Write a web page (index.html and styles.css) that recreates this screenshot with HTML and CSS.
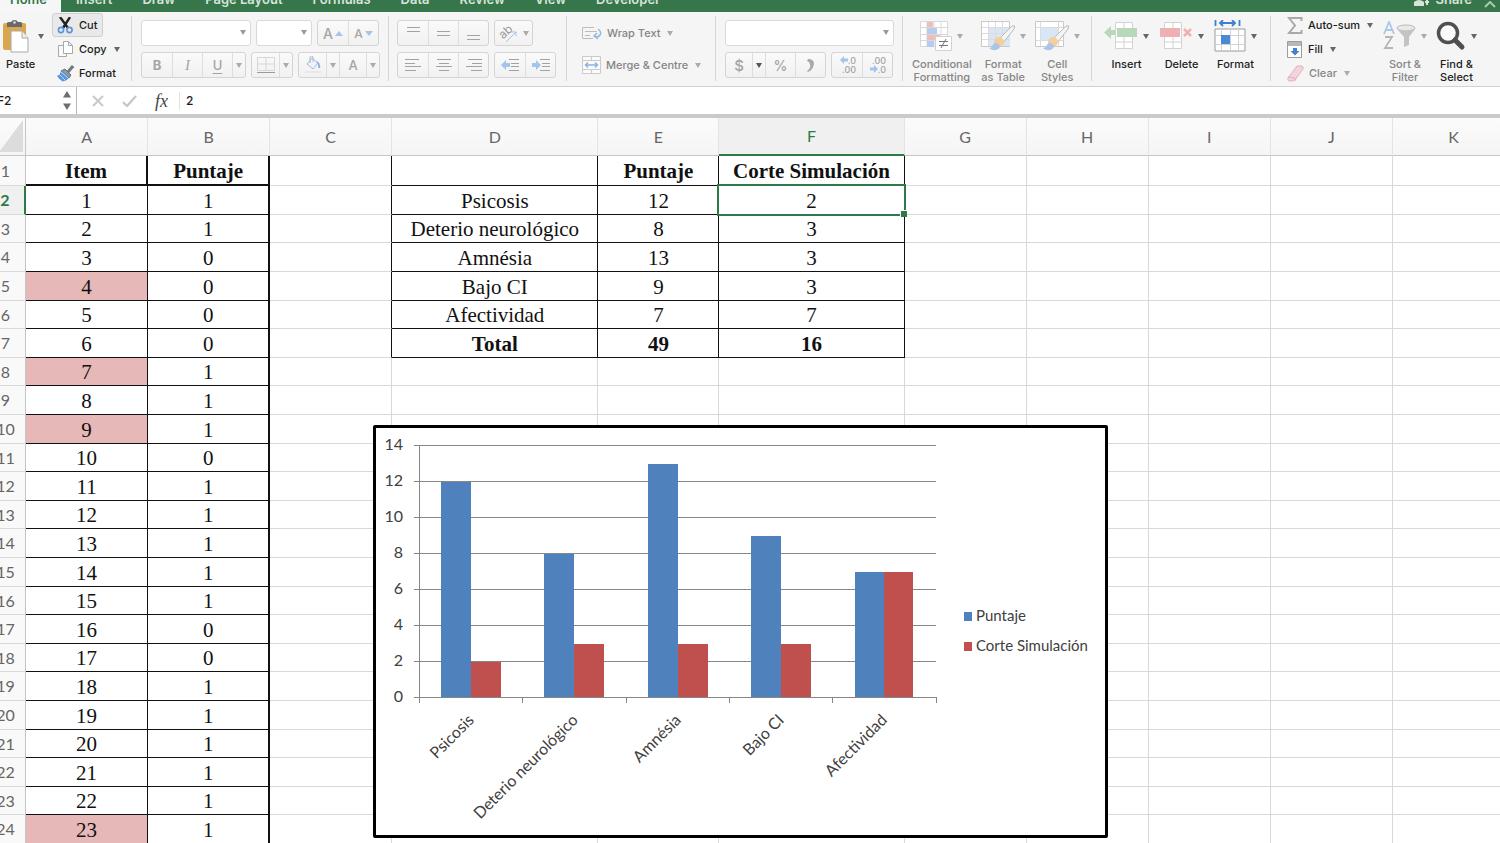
FILE: index.html
```html
<!DOCTYPE html>
<html lang="en">
<head>
<meta charset="utf-8">
<title>Spreadsheet</title>
<link rel="stylesheet" href="styles.css">
</head>
<body>
<svg class="defs" aria-hidden="true">
  <symbol id="caret" viewBox="0 0 6 5"><path d="M0 0h6L3 5z" fill="currentColor"/></symbol>
  <symbol id="brush" viewBox="0 0 28 26"><path d="M27 1 24 1 11 14l4 4L26 4z" fill="#f4f4f2" stroke="#b9b9b5"/><circle cx="11" cy="17" r="5" fill="#f3cf9f"/><path d="M1 23c4 0 3-4 6-5 3 0 5 2 5 4-2 4-8 4-11 1z" fill="#a9c6ea"/></symbol>
</svg>

<nav class="tabs" aria-label="Ribbon tabs">
  <a class="tab tab-active" href="#home">Home</a>
  <a class="tab" href="#insert">Insert</a>
  <a class="tab" href="#draw">Draw</a>
  <a class="tab" href="#layout">Page Layout</a>
  <a class="tab" href="#formulas">Formulas</a>
  <a class="tab" href="#data">Data</a>
  <a class="tab" href="#review">Review</a>
  <a class="tab" href="#view">View</a>
  <a class="tab" href="#developer">Developer</a>
  <a class="tab share" href="#share"><svg width="16" height="14" viewBox="0 0 16 14"><circle cx="5" cy="4" r="4" fill="#d5e5da"/><path d="M0 14V10q5-4 10 0v4z" fill="#d5e5da"/><path d="M13 7v6M11 10h4" stroke="#d5e5da" stroke-width="2"/></svg>Share</a>
  <a class="tab collapse" href="#collapse" aria-label="Collapse ribbon"><svg width="12" height="7" viewBox="0 0 12 7"><path d="m1 6 5-5 5 5" fill="none" stroke="#a9c9b3" stroke-width="2"/></svg></a>
</nav>

<div class="ribbon">
  <section class="group clipboard">
    <button class="big"><span class="pic"><svg width="26" height="34" viewBox="0 0 26 34"><rect x="0" y="4" width="23" height="27" rx="2" fill="#dba650"/><path d="M4 8V4q0-1 2-1h2a4 4 0 0 1 7 0h2q2 0 2 1v4z" fill="#6a6a6a"/><circle cx="11.500" cy="3.500" r="1.300" fill="#ddd"/><path d="M8 12h11l6 7v14H8z" fill="#fff" stroke="#aaa"/><path d="M19 12v7h6" fill="#eee" stroke="#aaa"/></svg><svg class="caret"><use href="#caret"/></svg></span><span>Paste</span></button>
    <div class="stack">
      <button class="small pressed"><svg width="17" height="17" viewBox="0 0 17 17"><path d="M3 0 11 11M13 0 6 11" stroke="#222" stroke-width="2.400"/><circle cx="4" cy="13" r="2.600" fill="none" stroke="#5b93dc" stroke-width="1.600"/><circle cx="12.500" cy="13" r="2.600" fill="none" stroke="#5b93dc" stroke-width="1.600"/></svg>Cut</button>
      <button class="small"><svg width="17" height="17" viewBox="0 0 17 17"><path d="M5.500.500h5l3 3v8h-8zM10.500.500v3h3" transform="translate(-4 4)" fill="#fafafa" stroke="#a9a9a9"/><path d="M6.500.500h5l4 4v8h-9zM11.500.500v4h4" fill="#fff" stroke="#a9a9a9"/></svg>Copy<svg class="caret"><use href="#caret"/></svg></button>
      <button class="small"><svg width="17" height="17" viewBox="0 0 17 17"><path d="m16 1-5 6" stroke="#6d7986" stroke-width="3"/><path d="m8 4 6 6-2 3-8-7z" fill="#8a98a5" stroke="#66727e"/><path d="M4 6 12 13q-3 4-7 3Q2 14 0 11q3-1 4-5z" fill="#5596de"/><path d="M2 9l6 6M4 7l7 6" stroke="#c3d9ef"/></svg>Format</button>
    </div>
  </section>

  <section class="group dim font">
    <div class="row">
      <span class="combo combo-font"><select aria-label="Font"><option></option></select><svg class="caret"><use href="#caret"/></svg></span>
      <span class="combo combo-size"><select aria-label="Font size"><option></option></select><svg class="caret"><use href="#caret"/></svg></span>
      <div class="seg"><button class="grow">A<svg width="8" height="5" viewBox="0 0 8 5"><path d="M0 5h8L4 0z" fill="#a8c3e4"/></svg></button><button class="shrink">A<svg width="8" height="5" viewBox="0 0 8 5"><path d="M0 0h8L4 5z" fill="#a8c3e4"/></svg></button></div>
    </div>
    <div class="row">
      <div class="seg"><button class="b">B</button><button class="i">I</button><button class="u">U</button><button class="drop" aria-label="Underline styles"><svg class="caret"><use href="#caret"/></svg></button></div>
      <div class="seg"><button class="mid" aria-label="Borders"><svg width="18" height="17" viewBox="0 0 18 17"><path d="M.500.500h17v13H.500zM9 0v14M0 7h18" fill="none" stroke="#d6d6d6"/><path d="M0 15.500h18" stroke="#9a9a9a"/></svg></button><button class="drop" aria-label="Border styles"><svg class="caret"><use href="#caret"/></svg></button></div>
      <div class="seg"><button class="mid" aria-label="Fill colour"><svg width="16" height="18" viewBox="0 0 16 18"><path d="m7 2 6 5-5 6-6-5z" fill="#eef3f9" stroke="#a9b9cf"/><path d="M5 7V1q2-2 3 0v5" fill="none" stroke="#a9b9cf"/><path d="M12 6q3 2 2 6" stroke="#8fb3e2" stroke-width="2" fill="none"/><path d="M0 16h16" stroke="#e8e8e8" stroke-width="2"/></svg></button><button class="drop" aria-label="Fill colours"><svg class="caret"><use href="#caret"/></svg></button><button class="mid">A</button><button class="drop" aria-label="Font colours"><svg class="caret"><use href="#caret"/></svg></button></div>
    </div>
  </section>

  <section class="group dim align">
    <div class="row">
      <div class="seg">
        <button aria-label="Top align"><svg width="15" height="14" viewBox="0 0 15 14"><path d="M1 1.500h13M1 5.500h13" stroke="#a2a2a2"/></svg></button>
        <button aria-label="Middle align"><svg width="15" height="14" viewBox="0 0 15 14"><path d="M1 5.500h13M1 9.500h13" stroke="#a2a2a2"/></svg></button>
        <button aria-label="Bottom align"><svg width="15" height="14" viewBox="0 0 15 14"><path d="M1 9.500h13M1 13.500h13" stroke="#a2a2a2"/></svg></button>
      </div>
      <div class="seg"><button class="orient" aria-label="Orientation"><svg width="20" height="20" viewBox="0 0 20 20"><text class="ab" x="2" y="15" transform="rotate(-42 5 13)">ab</text><path d="M7 19 17 9M13 9h4v4" fill="none" stroke="#a9c1e4"/></svg><svg class="caret"><use href="#caret"/></svg></button></div>
    </div>
    <div class="row">
      <div class="seg">
        <button aria-label="Align left"><svg width="16" height="12" viewBox="0 0 16 12"><path d="M0 .500h14M0 4.500h10M0 7.500h16M0 11.500h11" stroke="#a2a2a2"/></svg></button>
        <button aria-label="Centre"><svg width="16" height="12" viewBox="0 0 16 12"><path d="M1 .500h14M3 4.500h10M0 7.500h16M3 11.500h10" stroke="#a2a2a2"/></svg></button>
        <button aria-label="Align right"><svg width="16" height="12" viewBox="0 0 16 12"><path d="M2 .500h14M6 4.500h10M0 7.500h16M5 11.500h11" stroke="#a2a2a2"/></svg></button>
      </div>
      <div class="seg">
        <button aria-label="Decrease indent"><svg width="18" height="12" viewBox="0 0 18 12"><path d="M8 .500h10M10 4.500h8M10 7.500h8M8 11.500h10" stroke="#a2a2a2"/><path d="M0 6l5-5v3h4v4H5v3z" fill="#a3c4ec"/></svg></button>
        <button aria-label="Increase indent"><svg width="18" height="12" viewBox="0 0 18 12"><path d="M8 .500h10M10 4.500h8M10 7.500h8M8 11.500h10" stroke="#a2a2a2"/><path d="M9 6 4 1v3H0v4h4v3z" fill="#a3c4ec"/></svg></button>
      </div>
    </div>
  </section>

  <section class="group dim wrap">
    <button class="small"><svg width="20" height="15" viewBox="0 0 20 15"><path d="M12 1.500H.500v11H11M3 5.500h12M3 9.500h5" fill="none" stroke="#bcbcbc"/><path d="M16 3q4 3 2 6-2 3-5 1M15 7l-3 3 4 3" fill="none" stroke="#94b7e4" stroke-width="1.500"/></svg>Wrap Text<svg class="caret"><use href="#caret"/></svg></button>
    <button class="small"><svg width="19" height="18" viewBox="0 0 19 18"><path d="M.500.500h18v17H.500zM9.500 0v5M9.500 13v5M0 4.500h19M0 13.500h19" fill="#fafafa" stroke="#cbcbcb"/><path d="M3 9h13M6 6.500 3.500 9 6 11.500M13 6.500 15.500 9 13 11.500" fill="none" stroke="#8db2e4" stroke-width="1.500"/></svg>Merge &amp; Centre<svg class="caret"><use href="#caret"/></svg></button>
  </section>

  <section class="group dim number">
    <span class="combo combo-number"><select aria-label="Number format"><option></option></select><svg class="caret"><use href="#caret"/></svg></span>
    <div class="row">
      <div class="seg"><button class="money">$</button><button class="drop dark" aria-label="Currency"><svg class="caret"><use href="#caret"/></svg></button><button class="pct">%</button><button class="comma" aria-label="Comma style"><svg width="8" height="13" viewBox="0 0 8 13"><path d="M1 0q6 0 6 5-1 6-6 8l-1-1q4-3 3-6 0-3-3-4z" fill="#a9a9a9"/></svg></button></div>
      <div class="seg"><button class="dec"><span><svg width="8" height="8" viewBox="0 0 8 8"><path d="M0 4l4-4v2.500h4v3H4V8z" fill="#a3c4ec"/></svg>.0</span><span>.00</span></button><button class="dec"><span>.00</span><span><svg width="8" height="8" viewBox="0 0 8 8"><path d="M8 4 4 0v2.500H0v3h4V8z" fill="#a3c4ec"/></svg>.0</span></button></div>
    </div>
  </section>

  <section class="group dim styles">
    <button class="big"><span class="pic"><svg width="32" height="30" viewBox="0 0 32 30"><path d="M.500.500h27v25H.500zM7 0v26M14 0v26M21 0v26M0 6.500h28M0 13.500h28M0 19.500h28" fill="#fff" stroke="#d9d9d9"/><path d="M7 1h6v5H7zM7 14h13v5H7z" fill="#f3bcbc"/><path d="M7 7h10v6H7zM7 20h7v6H7z" fill="#b2cdf0"/><path d="M15.500 15.500h16v14h-16z" fill="#fff" stroke="#d2d2d2"/><path d="M19 20.500h9M19 24.500h9M26 18l-5 9" stroke="#777"/></svg><svg class="caret"><use href="#caret"/></svg></span><span>Conditional<br>Formatting</span></button>
    <button class="big"><span class="pic"><svg width="34" height="30" viewBox="0 0 34 30"><path d="M.500.500h28v25H.500z" fill="#fff" stroke="#c9c9c9"/><path d="M7 7h22v18H7z" fill="#d8e6f6"/><path d="M7.500 1v24M14.500 1v24M21.500 1v24M1 6.500h27M1 12.500h27M1 18.500h27" stroke="#dcdcdc"/><use href="#brush" x="7" y="4" width="28" height="26"/></svg><svg class="caret"><use href="#caret"/></svg></span><span>Format<br>as Table</span></button>
    <button class="big"><span class="pic"><svg width="34" height="30" viewBox="0 0 34 30"><path d="M.500.500h28v25H.500z" fill="#fff" stroke="#c9c9c9"/><path d="M5.500 1v24M23.500 1v24M1 6.500h27M1 19.500h27" stroke="#dcdcdc"/><path d="M6 7h17v12H6z" fill="#d8e6f6"/><use href="#brush" x="7" y="4" width="28" height="26"/></svg><svg class="caret"><use href="#caret"/></svg></span><span>Cell<br>Styles</span></button>
  </section>

  <section class="group cells">
    <button class="big"><span class="pic"><svg width="34" height="30" viewBox="0 0 34 30"><path d="M11.500 1.500h17v26h-17zM20 1v26M11 8h18M11 21h18" fill="#fff" stroke="#d2d2d2"/><path d="M13 7h20v9H13z" fill="#b7d9ba"/><path d="M0 11.500 7 5v4h4v5H7v4z" fill="#b7d9ba"/></svg><svg class="caret"><use href="#caret"/></svg></span><span>Insert</span></button>
    <button class="big"><span class="pic"><svg width="34" height="30" viewBox="0 0 34 30"><path d="M5.500 1.500h17v26h-17zM14 1v26M5 8h18M5 21h18" fill="#fff" stroke="#d2d2d2"/><path d="M1 7h20v9H1z" fill="#eeb0b3"/><path d="m25 8 7 7M32 8l-7 7" stroke="#eeb0b3" stroke-width="2.500"/></svg><svg class="caret"><use href="#caret"/></svg></span><span>Delete</span></button>
    <button class="big"><span class="pic"><svg width="32" height="32" viewBox="0 0 32 32"><path d="M1.500 0v6M25.500 0v6M6 3h15M9 0 6 3l3 3M18 0l3 3-3 3" fill="none" stroke="#3c80cf" stroke-width="1.800"/><path d="M1 9h30v22H1z" fill="#fff" stroke="#9b9b9b"/><path d="M7.500 9v21M16.500 9v21M24.500 9v21M1 15.500h30M1 24.500h30" stroke="#d2d2d2"/><path d="M7 15h9v9H7z" fill="#4a8ad4"/></svg><svg class="caret"><use href="#caret"/></svg></span><span>Format</span></button>
  </section>

  <section class="group editing">
    <div class="stack">
      <button class="small"><svg width="16" height="17" viewBox="0 0 16 17"><path d="M14.500 4V1H2l6 7.500L2 16h12.500v-3" fill="none" stroke="#a9a9a9" stroke-width="2"/></svg>Auto-sum<svg class="caret"><use href="#caret"/></svg></button>
      <button class="small"><svg width="16" height="17" viewBox="0 0 16 17"><path d="M.500.500h14v16H.500z" fill="#fff" stroke="#9d9d9d"/><path d="M1 1h13v4H1z" fill="#b8b8b8"/><path d="M6 7h4v3h2.500L8 14.500 3.500 10H6z" fill="#3f82d2"/></svg>Fill<svg class="caret"><use href="#caret"/></svg></button>
      <button class="small dim"><svg width="17" height="17" viewBox="0 0 17 17"><path d="M10 1h5q2 1 1 3l-8 11q-1 1-3 1H2q-2-1-1-3z" fill="#f4d3da" stroke="#dfb5bf"/><path d="m1 12 7 1v3" fill="none" stroke="#dfb5bf"/></svg>Clear<svg class="caret"><use href="#caret"/></svg></button>
    </div>
    <button class="big dim"><span class="pic"><svg width="33" height="30" viewBox="0 0 33 30"><path d="M1 13 6 1l5 12M3 9h6" fill="none" stroke="#a9c7ea" stroke-width="1.800"/><path d="M2 16h7L2 27h8" fill="none" stroke="#b5b5b5" stroke-width="1.800"/><ellipse cx="23" cy="7" rx="9" ry="3" fill="#e9e9e9" stroke="#b9b9b9"/><path d="M14 8q4 3 18 0l-6 8v8l-5 2V16z" fill="#c3c3c3"/></svg><svg class="caret"><use href="#caret"/></svg></span><span>Sort &amp;<br>Filter</span></button>
    <button class="big"><span class="pic"><svg width="30" height="30" viewBox="0 0 30 30"><circle cx="12" cy="12" r="9.500" fill="#fafafa" stroke="#505050" stroke-width="3.500"/><path d="m19 19 7 7" stroke="#505050" stroke-width="5" stroke-linecap="round"/></svg><svg class="caret"><use href="#caret"/></svg></span><span>Find &amp;<br>Select</span></button>
  </section>
</div>

<div class="formula-bar">
  <div class="name-box"><input aria-label="Name box" value="F2"><svg width="8" height="20" viewBox="0 0 8 20"><path d="M0 6.500 4 0l4 6.500zM0 12.500h8L4 19z" fill="#6e6e6e"/></svg></div>
  <button class="fb-btn" aria-label="Cancel"><svg width="12" height="12" viewBox="0 0 12 12"><path d="m1 1 10 10M11 1 1 11" stroke="#c9c9c9" stroke-width="2"/></svg></button>
  <button class="fb-btn" aria-label="Enter"><svg width="15" height="12" viewBox="0 0 15 12"><path d="m1 7 4 4 9-10" fill="none" stroke="#c9c9c9" stroke-width="2.400"/></svg></button>
  <button class="fx">fx</button>
  <input class="formula" aria-label="Formula" value="2">
</div>

<main class="sheet">
  <table>
    <colgroup><col class="c-head"><col><col><col><col class="c-d"><col class="c-e"><col class="c-f"><col><col><col><col><col></colgroup>
    <thead><tr><th class="corner"><svg width="24" height="33" viewBox="0 0 24 33"><path d="M24 0v32H0z" fill="#dcdcdc"/></svg></th><th>A</th><th>B</th><th>C</th><th>D</th><th>E</th><th class="sel">F</th><th>G</th><th>H</th><th>I</th><th>J</th><th>K</th></tr></thead>
    <tbody>
      <tr><th>1</th><td>Item</td><td>Puntaje</td><td></td><td></td><td>Puntaje</td><td>Corte Simulación</td><td></td><td></td><td></td><td></td><td></td></tr>
      <tr><th class="sel">2</th><td>1</td><td>1</td><td></td><td>Psicosis</td><td>12</td><td class="active">2</td><td></td><td></td><td></td><td></td><td></td></tr>
      <tr><th>3</th><td>2</td><td>1</td><td></td><td>Deterio neurológico</td><td>8</td><td>3</td><td></td><td></td><td></td><td></td><td></td></tr>
      <tr><th>4</th><td>3</td><td>0</td><td></td><td>Amnésia</td><td>13</td><td>3</td><td></td><td></td><td></td><td></td><td></td></tr>
      <tr><th>5</th><td class="pink">4</td><td>0</td><td></td><td>Bajo CI</td><td>9</td><td>3</td><td></td><td></td><td></td><td></td><td></td></tr>
      <tr><th>6</th><td>5</td><td>0</td><td></td><td>Afectividad</td><td>7</td><td>7</td><td></td><td></td><td></td><td></td><td></td></tr>
      <tr class="total"><th>7</th><td>6</td><td>0</td><td></td><td>Total</td><td>49</td><td>16</td><td></td><td></td><td></td><td></td><td></td></tr>
      <tr><th>8</th><td class="pink">7</td><td>1</td><td></td><td></td><td></td><td></td><td></td><td></td><td></td><td></td><td></td></tr>
      <tr><th>9</th><td>8</td><td>1</td><td></td><td></td><td></td><td></td><td></td><td></td><td></td><td></td><td></td></tr>
      <tr><th>10</th><td class="pink">9</td><td>1</td><td></td><td></td><td></td><td></td><td></td><td></td><td></td><td></td><td></td></tr>
      <tr><th>11</th><td>10</td><td>0</td><td></td><td></td><td></td><td></td><td></td><td></td><td></td><td></td><td></td></tr>
      <tr><th>12</th><td>11</td><td>1</td><td></td><td></td><td></td><td></td><td></td><td></td><td></td><td></td><td></td></tr>
      <tr><th>13</th><td>12</td><td>1</td><td></td><td></td><td></td><td></td><td></td><td></td><td></td><td></td><td></td></tr>
      <tr><th>14</th><td>13</td><td>1</td><td></td><td></td><td></td><td></td><td></td><td></td><td></td><td></td><td></td></tr>
      <tr><th>15</th><td>14</td><td>1</td><td></td><td></td><td></td><td></td><td></td><td></td><td></td><td></td><td></td></tr>
      <tr><th>16</th><td>15</td><td>1</td><td></td><td></td><td></td><td></td><td></td><td></td><td></td><td></td><td></td></tr>
      <tr><th>17</th><td>16</td><td>0</td><td></td><td></td><td></td><td></td><td></td><td></td><td></td><td></td><td></td></tr>
      <tr><th>18</th><td>17</td><td>0</td><td></td><td></td><td></td><td></td><td></td><td></td><td></td><td></td><td></td></tr>
      <tr><th>19</th><td>18</td><td>1</td><td></td><td></td><td></td><td></td><td></td><td></td><td></td><td></td><td></td></tr>
      <tr><th>20</th><td>19</td><td>1</td><td></td><td></td><td></td><td></td><td></td><td></td><td></td><td></td><td></td></tr>
      <tr><th>21</th><td>20</td><td>1</td><td></td><td></td><td></td><td></td><td></td><td></td><td></td><td></td><td></td></tr>
      <tr><th>22</th><td>21</td><td>1</td><td></td><td></td><td></td><td></td><td></td><td></td><td></td><td></td><td></td></tr>
      <tr><th>23</th><td>22</td><td>1</td><td></td><td></td><td></td><td></td><td></td><td></td><td></td><td></td><td></td></tr>
      <tr><th>24</th><td class="pink">23</td><td>1</td><td></td><td></td><td></td><td></td><td></td><td></td><td></td><td></td><td></td></tr>
    </tbody>
  </table>

  <figure class="chart">
    <svg width="729" height="407" viewBox="0 0 729 407" role="img" aria-label="Puntaje and Corte Simulación by category">
      <path d="M38 17.500H560M38 53.500H560M38 89.500H560M38 125.500H560M38 161.500H560M38 197.500H560M38 233.500H560" class="line"/>
      <g class="blue">
        <rect x="65" y="54" width="30" height="215"/><rect x="168" y="126" width="30" height="143"/><rect x="272" y="36" width="30" height="233"/><rect x="375" y="108" width="30" height="161"/><rect x="479" y="144" width="29" height="125"/>
        <rect x="588" y="184" width="8" height="9"/>
      </g>
      <g class="red">
        <rect x="95" y="234" width="30" height="35"/><rect x="198" y="216" width="30" height="53"/><rect x="302" y="216" width="30" height="53"/><rect x="405" y="216" width="30" height="53"/><rect x="508" y="144" width="29" height="125"/>
        <rect x="588" y="214" width="8" height="9"/>
      </g>
      <path d="M38 269.500H560M43.500 17V275M146.500 269v6M250.500 269v6M353.500 269v6M456.500 269v6M560.500 269v6" class="line"/>
      <g class="values">
        <text x="27" y="22">14</text><text x="27" y="58">12</text><text x="27" y="94">10</text><text x="27" y="130">8</text><text x="27" y="166">6</text><text x="27" y="202">4</text><text x="27" y="238">2</text><text x="27" y="274">0</text>
      </g>
      <g class="cats">
        <text transform="translate(99 293) rotate(-45)">Psicosis</text>
        <text transform="translate(203 293) rotate(-45)">Deterio neurológico</text>
        <text transform="translate(306 293) rotate(-45)">Amnésia</text>
        <text transform="translate(409 293) rotate(-45)">Bajo CI</text>
        <text transform="translate(512 293) rotate(-45)">Afectividad</text>
      </g>
      <g class="legend"><text x="600" y="193">Puntaje</text><text x="600" y="223">Corte Simulación</text></g>
    </svg>
  </figure>
</main>
</body>
</html>
```
FILE: styles.css
```css
* { box-sizing: border-box; }

body {
  margin: 0;
  height: 100vh;
  display: flex;
  flex-direction: column;
  overflow: hidden;
  background: #fff;
  font-family: Inter, "Liberation Sans", sans-serif;
  font-size: 11px;
  font-weight: 500;
  color: #1c1c1c;
}

.defs { display: none; }

button, input, select {
  font: inherit;
  color: inherit;
  border: 0;
  padding: 0;
  margin: 0;
  background: none;
}

.caret { width: 6px; height: 5px; color: #666; flex: none; }
.dim { color: #858585; }
.dim .caret { color: #ababab; }

/* Tab strip */
.tabs {
  flex: none;
  display: flex;
  align-items: flex-end;
  height: 12px;
  overflow: hidden;
  background: #36764a;
}
.tab {
  padding: 0 15px 4px;
  line-height: 18px;
  font-size: 13px;
  font-weight: 600;
  color: #d5e5da;
  text-decoration: none;
  white-space: nowrap;
}
.tab-active {
  width: 61px;
  padding: 0 10px 4px;
  background: #f6f6f6;
  color: #36764a;
}
.share {
  display: flex;
  align-items: center;
  gap: 6px;
  margin-left: auto;
  padding: 0 6px 4px;
}
.collapse { padding: 0 4px 0 6px; }

/* Ribbon */
.ribbon {
  flex: none;
  display: flex;
  height: 75px;
  background: #f5f5f5;
  border-bottom: 1px solid #d2d2d2;
}
.group {
  flex: none;
  display: flex;
  margin: 4px 0 5px;
  border-right: 1px solid #d6d6d6;
}
.font, .align, .wrap, .number {
  flex-direction: column;
  gap: 6px;
  padding-top: 4px;
  padding-left: 9px;
}
.clipboard { width: 132px; padding-left: 3px; gap: 8px; }
.font { width: 257px; }
.align { width: 178px; padding-left: 8px; }
.wrap { width: 149px; padding-left: 14px; }
.number { width: 187px; }
.styles { width: 189px; padding-left: 9px; gap: 9px; }
.cells { width: 179px; padding-left: 12px; gap: 10px; }
.editing { flex: 1; padding-left: 15px; gap: 9px; border-right: 0; }
.row { display: flex; gap: 5px; }

.seg {
  display: flex;
  height: 26px;
  border: 1px solid #d4d4d4;
  border-radius: 3px;
  background: linear-gradient(#fafafa, #f1f1f1);
}
.seg button {
  display: flex;
  align-items: center;
  justify-content: center;
  width: 30px;
  font-size: 13px;
  color: #a4a4a4;
}
.seg button + button { border-left: 1px solid #dedede; }
.seg .drop { width: 13px; }
.seg .mid { width: 27px; }
.seg .b { font-weight: 700; }
.seg .i { font-family: "Liberation Serif", serif; font-style: italic; font-size: 15px; }
.seg .u { text-decoration: underline; text-underline-offset: 3px; }
.seg .grow, .seg .shrink { font-size: 14px; gap: 2px; }
.seg .shrink { font-size: 12px; }
.seg .orient { width: 37px; gap: 4px; }
.seg .money { width: 26px; font-size: 15px; }
.seg .pct { font-size: 14px; }
.seg .dark .caret { color: #555; }
.seg .dec {
  flex-direction: column;
  align-items: flex-end;
  padding-right: 6px;
  font-size: 9px;
  line-height: 9px;
}
.ab { font: 12px Inter, sans-serif; fill: #9c9c9c; }

.combo { position: relative; display: flex; height: 26px; }
.combo select {
  width: 100%;
  appearance: none;
  background: #fff;
  border: 1px solid #d9d9d9;
  border-radius: 3px;
}
.combo .caret { position: absolute; right: 5px; top: 10px; color: #999; }
.combo-font { width: 110px; }
.combo-size { width: 56px; }
.combo-number { width: 169px; }

.big {
  display: flex;
  flex-direction: column;
  align-items: center;
  align-self: flex-start;
  gap: 6px;
  padding-top: 4px;
  line-height: 13px;
}
.pic {
  display: flex;
  align-items: center;
  justify-content: center;
  gap: 5px;
  height: 32px;
}
.clipboard .pic { gap: 9px; }
.clipboard .big { align-items: flex-start; }
.clipboard .big > span + span { padding-left: 3px; }
.stack { display: flex; flex-direction: column; margin-top: -3px; align-items: flex-start; }
.editing .stack { width: 88px; }
.small {
  flex: none;
  display: flex;
  align-items: center;
  gap: 5px;
  height: 24px;
  padding: 0 6px;
  border: 1px solid transparent;
  white-space: nowrap;
}
.stack .small { padding: 0 5px 0 4px; }
.stack .small .caret, .wrap .small .caret { margin-left: 2px; }
.editing .stack .small { padding: 0; }
.wrap .small { padding: 0; height: 26px; }
.small.pressed {
  background: #e9e9e9;
  border-color: #cfcfcf;
  border-radius: 3px;
}

/* Formula bar */
.formula-bar {
  flex: none;
  display: flex;
  align-items: center;
  height: 31px;
  border-bottom: 4px solid #cacaca;
  background: #fff;
}
.name-box {
  display: flex;
  align-items: center;
  width: 77px;
  height: 27px;
  margin-right: 15px;
  padding-right: 5px;
  border-right: 1px solid #b5b5b5;
}
.name-box input { flex: 1; width: 40px; margin-left: -3px; font-size: 12px; }
.name-box svg { flex: none; }
.fb-btn { display: flex; margin-right: 18px; }
.fx {
  width: 25px;
  margin-right: 6px;
  border-right: 1px solid #e2e2e2;
  text-align: left;
  font: italic 18px/18px "Liberation Serif", serif;
  color: #444;
}
.formula { flex: 1; font-size: 12px; font-weight: 500; }

/* Sheet */
.sheet { position: relative; flex: 1; overflow: hidden; }
table {
  width: 1529px;
  margin-left: -14px;
  table-layout: fixed;
  border-collapse: separate;
  border-spacing: 0;
}
col { width: 122px; }
.c-head { width: 40px; }
.c-d { width: 206px; }
.c-e { width: 121px; }
.c-f { width: 185px; }

th, td {
  padding: 0;
  text-align: center;
  white-space: nowrap;
  border: 0 solid #d9d9d9;
  border-width: 0 1px 1px 0;
}
th {
  font: 16px/20px Lato, sans-serif;
  color: #666;
  background: #f9f9f9;
}
thead th {
  height: 38px;
  background: linear-gradient(#fbfbfb, #f5f5f5);
  border-bottom-color: #c6c6c6;
  border-right-color: #e4e4e4;
}
tbody th { border-right-color: #c6c6c6; }
.corner { text-align: right; padding-right: 2px; border-right-color: #c6c6c6; }
.corner svg { display: block; margin-left: auto; }
.sel { color: #2c7a45; }
thead .sel { background: #f0f0f0; border-bottom: 2px solid #2c7a45; }
tbody .sel { background: #f0f0f0; border-right: 2px solid #2c7a45; font-weight: 700; }

tbody tr { height: 29px; }
tbody tr:nth-child(5n+3), tbody tr:nth-child(5n+6) { height: 28px; }
tbody tr:first-child { height: 30px; }
td { padding-top: 1px; font: 21px/22px "Liberation Serif", serif; color: #111; }
tr:first-child td, .total td:nth-child(n+5) { font-weight: 700; }

/* Bordered score list in columns A and B */
td:nth-child(2), td:nth-child(3) { border-color: #111; }
td:nth-child(3) { border-right-width: 2px; }
tr:first-child td:nth-child(2) { border-width: 0 2px 2px 0; }
tr:first-child td:nth-child(3) { border-bottom-width: 2px; }
.pink { background: #e6b8b7; }

/* Bordered summary in columns D to F */
tr:nth-child(-n+7) td:nth-child(4) { border-right-color: #111; }
tr:nth-child(-n+7) td:nth-child(n+5):nth-child(-n+7) { border-color: #111; }

.active { position: relative; }
.active::before {
  content: "";
  position: absolute;
  inset: -2px -2px -2px -2px;
  border: 2px solid #2c7a45;
}
.active::after {
  content: "";
  position: absolute;
  right: -3px;
  bottom: -3px;
  width: 6px;
  height: 6px;
  background: #2c7a45;
  border: solid #fff;
  border-width: 1px 0 0 1px;
}

/* Chart floating over the grid */
.chart {
  position: absolute;
  left: 373px;
  top: 307px;
  margin: 0;
  border: 3px solid #000;
  border-radius: 2px;
  background: #fff;
}
.chart svg { display: block; }
.chart text { font-family: Lato, sans-serif; font-size: 16px; font-weight: 400; fill: #404040; }
.chart .legend text { font-size: 15px; }
.values, .cats { text-anchor: end; }
.line { fill: none; stroke: #868686; }
.blue { fill: #4f81bd; }
.red { fill: #c0504d; }
```
